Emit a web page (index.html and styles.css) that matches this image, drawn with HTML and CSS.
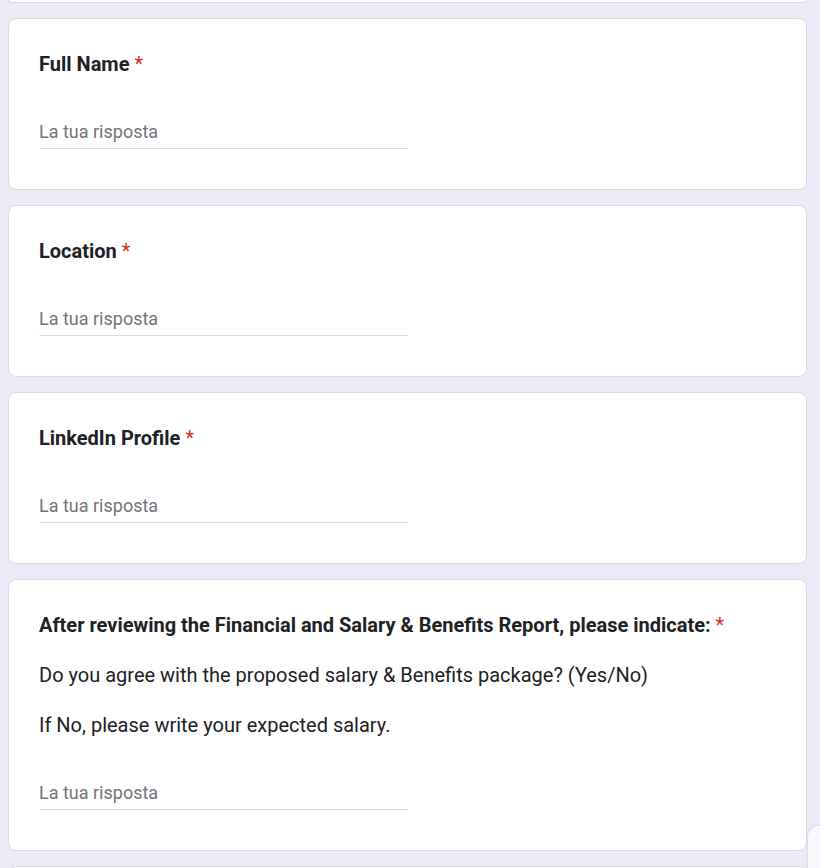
FILE: index.html
```html
<!DOCTYPE html>
<html lang="en">
<head>
  <meta charset="UTF-8">
  <title>Modulo candidatura</title>
  <link rel="stylesheet" href="styles.css">
</head>
<body>
  <div class="form-list">
    <div class="card card-tail"></div>

    <div class="card">
      <div class="q-title">Full Name <span class="req">*</span></div>
      <input class="answer" type="text" placeholder="La tua risposta">
    </div>

    <div class="card">
      <div class="q-title">Location <span class="req">*</span></div>
      <input class="answer" type="text" placeholder="La tua risposta">
    </div>

    <div class="card">
      <div class="q-title">LinkedIn Profile <span class="req">*</span></div>
      <input class="answer" type="text" placeholder="La tua risposta">
    </div>

    <div class="card">
      <div class="q-title">After reviewing the Financial and Salary &amp; Benefits Report, please indicate: <span class="req">*</span></div>
      <p class="q-text">Do you agree with the proposed salary &amp; Benefits package? (Yes/No)</p>
      <p class="q-text">If No, please write your expected salary.</p>
      <input class="answer" type="text" placeholder="La tua risposta">
    </div>

    <div class="card card-next"></div>
  </div>

  <div class="side-tab"></div>
</body>
</html>
```

FILE: styles.css
```css
body {
  background-color: #eeeaf8;
  font-family: Roboto, Arial, sans-serif;
  margin: 0;
  overflow: hidden;
  height: 868px;
  position: relative;
}

.form-list {
  display: flex;
  flex-direction: column;
  gap: 15px;
  width: 799px;
  margin-left: 8px;
}

.card {
  background-color: white;
  border: 1px solid #dadce0;
  border-radius: 8px;
  padding: 32px 30px 40px;
}

.card-tail {
  height: 2px;
  padding: 0;
  border-top: none;
  border-radius: 0 0 8px 8px;
}

.card-next {
  height: 40px;
  padding: 0;
  border-bottom: none;
  border-radius: 8px 8px 0 0;
}

.q-title {
  font-size: 20px;
  font-weight: bold;
  line-height: 27px;
  color: #202124;
}

.req {
  color: #d93025;
  font-weight: normal;
}

.q-text {
  margin: 23px 0 0;
  font-size: 20px;
  line-height: 27px;
  color: #202124;
}

.answer {
  display: block;
  margin-top: 42px;
  width: 369px;
  box-sizing: border-box;
  padding: 0 0 6px;
  border: none;
  border-bottom: 1px solid #dadce0;
  font-family: Roboto, Arial, sans-serif;
  font-size: 18px;
  line-height: 22px;
  height: 29px;
  color: #202124;
  outline: none;
  background: transparent;
}

.answer::placeholder {
  color: #70757a;
}

.side-tab {
  position: absolute;
  left: 808px;
  top: 826px;
  width: 40px;
  height: 60px;
  background-color: #f8f7fb;
  border-radius: 10px 0 0 0;
  box-shadow: 0 0 3px rgba(0, 0, 0, 0.15);
}
```
